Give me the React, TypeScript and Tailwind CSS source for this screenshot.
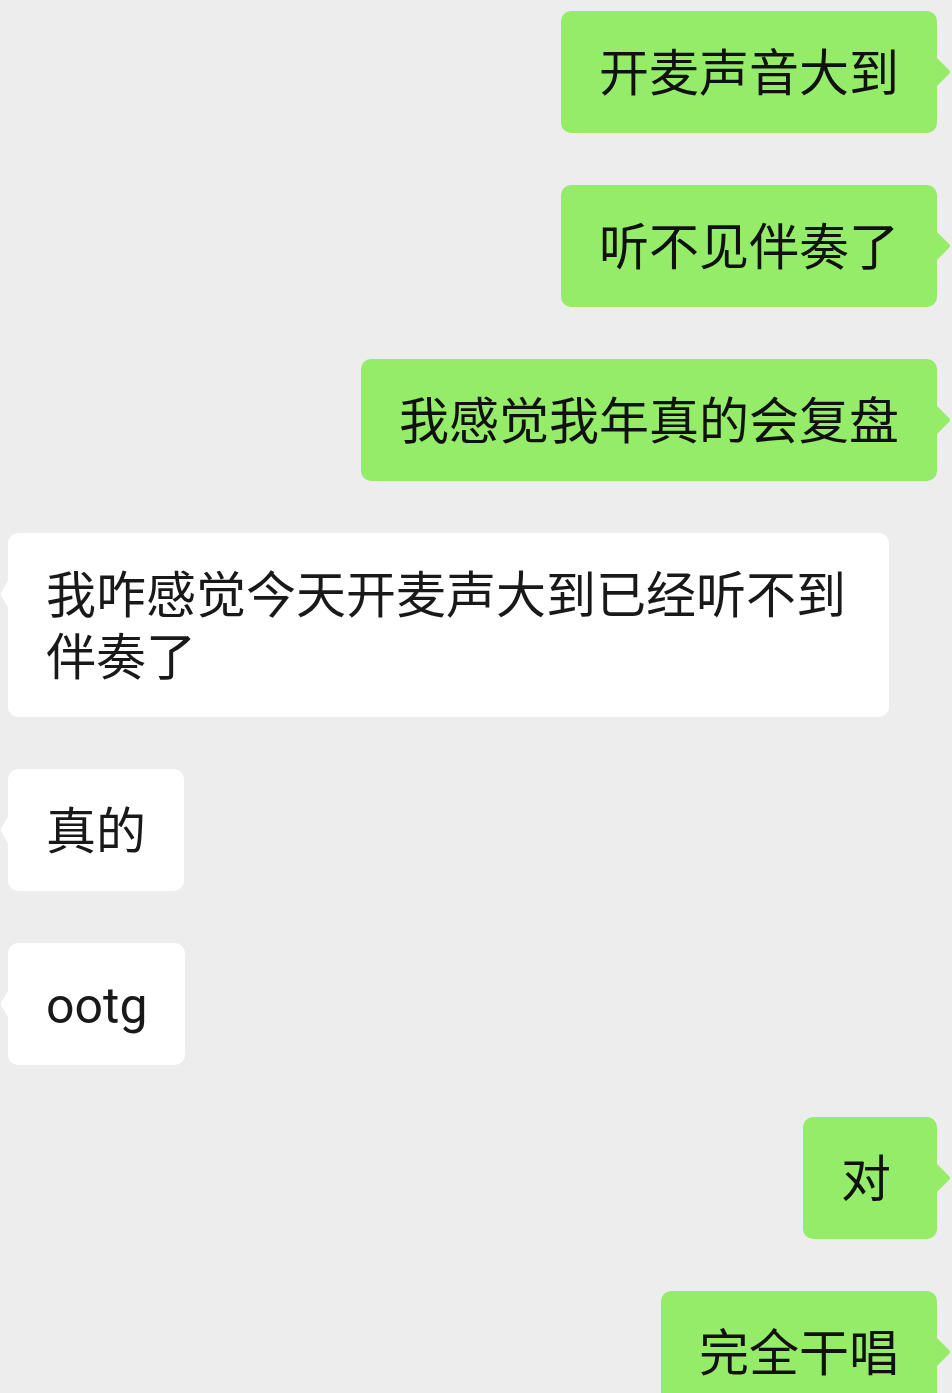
import React from "react";

type Msg = { text: string; mine: boolean };

const messages: Msg[] = [
  { text: "开麦声音大到", mine: true },
  { text: "听不见伴奏了", mine: true },
  { text: "我感觉我年真的会复盘", mine: true },
  { text: "我咋感觉今天开麦声大到已经听不到伴奏了", mine: false },
  { text: "真的", mine: false },
  { text: "ootg", mine: false },
  { text: "对", mine: true },
  { text: "完全干唱", mine: true },
];

const Bubble = ({ text, mine }: Msg) => {
  if (mine) {
    return (
      <div className="flex justify-end pr-[15px]">
        <div className="relative min-w-[134px] max-w-[881px] rounded-[10px] bg-[#95ec69] px-[38px] pb-[28px] pt-[32px] text-[50px] leading-[62px] text-[#111111]">
          {text}
          <svg
            className="absolute -right-[14px] top-[46px]"
            width="15"
            height="30"
            viewBox="0 0 15 30"
          >
            <path d="M0 0 L13 13 Q15 15 13 17 L0 30 Z" fill="#95ec69" />
          </svg>
        </div>
      </div>
    );
  }
  return (
    <div className="flex justify-start pl-[8px]">
      <div className="relative max-w-[881px] rounded-[10px] bg-white px-[38px] pb-[28px] pt-[32px] text-[50px] leading-[62px] text-[#191919]">
        {text}
        <svg
          className="absolute -left-[8px] top-[46px]"
          width="9"
          height="30"
          viewBox="0 0 9 30"
        >
          <path d="M9 0 L1.5 13 Q0 15 1.5 17 L9 30 Z" fill="#ffffff" />
        </svg>
      </div>
    </div>
  );
};

export default function App() {
  return (
    <div
      className="h-[1393px] w-[952px] overflow-hidden bg-[#ededed] pt-[11px]"
      style={{ fontFamily: 'Roboto, "Noto Sans CJK SC", sans-serif' }}
    >
      <div className="flex flex-col gap-[52px]">
        {messages.map((m, i) => (
          <Bubble key={i} {...m} />
        ))}
      </div>
    </div>
  );
}
